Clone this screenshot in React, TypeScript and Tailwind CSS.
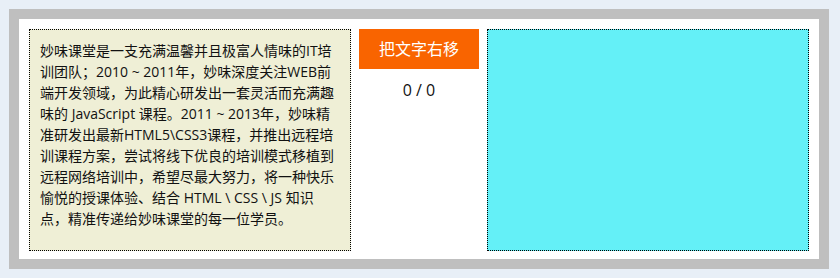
export default function App() {
  return (
    <div className="min-h-[278px] w-[840px] bg-[#e8eff7] pt-[9px] pl-[9px]" style={{ fontFamily: '"Open Sans", "Noto Sans CJK SC", sans-serif' }}>
      <div className="w-[820px] h-[260px] border-[10px] border-[#bfbfbf] bg-white p-[10px] flex gap-[8px]">
        <div className="w-[322px] h-[222px] border border-dotted border-black bg-[#efefd6] px-[10px] py-[10px] text-[14px] leading-[21px] text-[#111]">
          妙味课堂是一支充满温馨并且极富人情味的IT培训团队；2010 ~ 2011年，妙味深度关注WEB前端开发领域，为此精心研发出一套灵活而充满趣味的 JavaScript 课程。2011 ~ 2013年，妙味精准研发出最新HTML5\CSS3课程，并推出远程培训课程方案，尝试将线下优良的培训模式移植到远程网络培训中，希望尽最大努力，将一种快乐愉悦的授课体验、结合 HTML \ CSS \ JS 知识点，精准传递给妙味课堂的每一位学员。
        </div>
        <div className="w-[120px] flex flex-col items-center">
          <button className="w-[120px] h-[40px] bg-[#f96400] text-white text-[16px] leading-[40px]">把文字右移</button>
          <div className="mt-[11px] text-[16px] leading-[20px] text-[#111]">0 / 0</div>
        </div>
        <div className="w-[322px] h-[222px] border border-dotted border-black bg-[#64f0f7]"></div>
      </div>
    </div>
  );
}
